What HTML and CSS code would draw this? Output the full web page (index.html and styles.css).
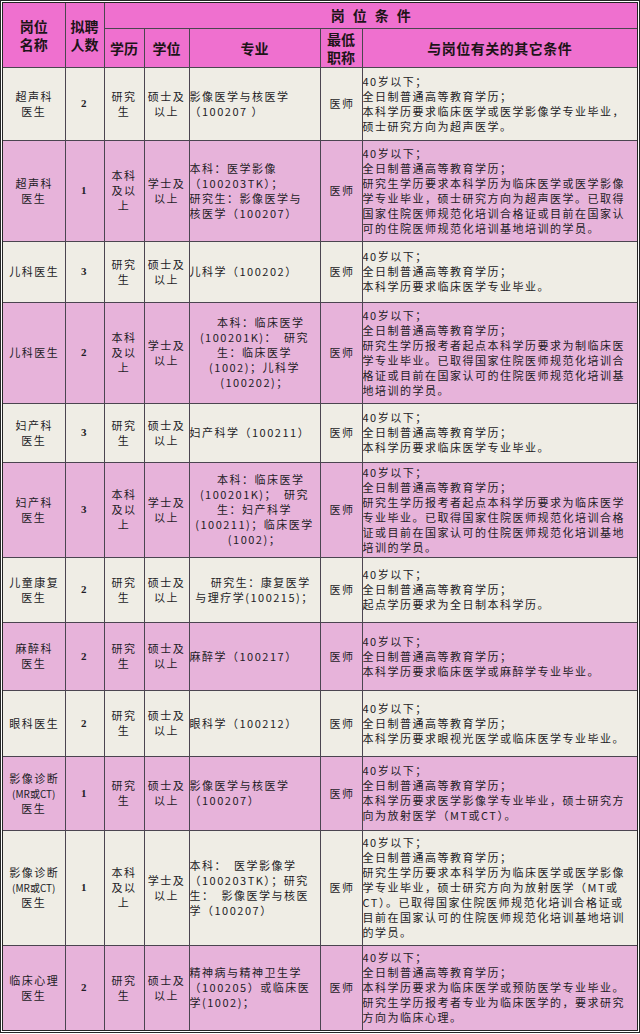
FILE: index.html
```html
<!DOCTYPE html>
<html lang="zh-CN">
<head>
<meta charset="utf-8">
<title>岗位条件</title>
<link rel="stylesheet" href="styles.css">
</head>
<body>
<div class="sheet">
<table class="jobs">
<colgroup>
<col class="c-name"><col class="c-num"><col class="c-edu"><col class="c-deg"><col class="c-major"><col class="c-title"><col class="c-other">
</colgroup>
<thead>
<tr class="hr1">
<th rowspan="2" class="hname">岗位<br>名称</th>
<th rowspan="2" class="hname">拟聘<br>人数</th>
<th colspan="5" class="hcond">岗位条件</th>
</tr>
<tr class="hr2">
<th>学历</th><th>学位</th><th>专业</th><th class="htitle">最低<br>职称</th><th class="hother">与岗位有关的其它条件</th>
</tr>
</thead>
<tbody>
<tr>
<td class="name">超声科<br>医生</td><td class="num">2</td><td class="edu">研究<br>生</td><td class="deg">硕士及<br>以上</td>
<td class="major">影像医学与核医学<br>（100207 ）</td><td class="title">医师</td>
<td class="other">40岁以下；<br>全日制普通高等教育学历；<br>本科学历要求临床医学或医学影像学专业毕业，<br>硕士研究方向为超声医学。</td>
</tr>
<tr>
<td class="name">超声科<br>医生</td><td class="num">1</td><td class="edu">本科<br>及以<br>上</td><td class="deg">学士及<br>以上</td>
<td class="major">本科：医学影像<br>（100203TK）；<br>研究生：影像医学与<br>核医学（100207）</td><td class="title">医师</td>
<td class="other">40岁以下；<br>全日制普通高等教育学历；<br>研究生学历要求本科学历为临床医学或医学影像<br>学专业毕业，硕士研究方向为超声医学。已取得<br>国家住院医师规范化培训合格证或目前在国家认<br>可的住院医师规范化培训基地培训的学员。</td>
</tr>
<tr>
<td class="name">儿科医生</td><td class="num">3</td><td class="edu">研究<br>生</td><td class="deg">硕士及<br>以上</td>
<td class="major">儿科学（100202）</td><td class="title">医师</td>
<td class="other">40岁以下；<br>全日制普通高等教育学历；<br>本科学历要求临床医学专业毕业。</td>
</tr>
<tr>
<td class="name">儿科医生</td><td class="num">2</td><td class="edu">本科<br>及以<br>上</td><td class="deg">学士及<br>以上</td>
<td class="major center">　本科：临床医学<br>(100201K)：　研究<br>生：临床医学<br>(1002)；儿科学<br>(100202)；</td><td class="title">医师</td>
<td class="other">40岁以下；<br>全日制普通高等教育学历；<br>研究生学历报考者起点本科学历要求为制临床医<br>学专业毕业。已取得国家住院医师规范化培训合<br>格证或目前在国家认可的住院医师规范化培训基<br>地培训的学员。</td>
</tr>
<tr>
<td class="name">妇产科<br>医生</td><td class="num">3</td><td class="edu">研究<br>生</td><td class="deg">硕士及<br>以上</td>
<td class="major">妇产科学（100211）</td><td class="title">医师</td>
<td class="other">40岁以下；<br>全日制普通高等教育学历；<br>本科学历要求临床医学专业毕业。</td>
</tr>
<tr>
<td class="name">妇产科<br>医生</td><td class="num">3</td><td class="edu">本科<br>及以<br>上</td><td class="deg">学士及<br>以上</td>
<td class="major center">　本科：临床医学<br>(100201K)；　研究<br>生：妇产科学<br>(100211)；临床医学<br>(1002)；</td><td class="title">医师</td>
<td class="other">40岁以下；<br>全日制普通高等教育学历；<br>研究生学历报考者起点本科学历要求为临床医学<br>专业毕业。已取得国家住院医师规范化培训合格<br>证或目前在国家认可的住院医师规范化培训基地<br>培训的学员。</td>
</tr>
<tr>
<td class="name">儿童康复<br>医生</td><td class="num">2</td><td class="edu">研究<br>生</td><td class="deg">硕士及<br>以上</td>
<td class="major center">　研究生：康复医学<br>与理疗学(100215)；</td><td class="title">医师</td>
<td class="other">40岁以下；<br>全日制普通高等教育学历；<br>起点学历要求为全日制本科学历。</td>
</tr>
<tr>
<td class="name">麻醉科<br>医生</td><td class="num">2</td><td class="edu">研究<br>生</td><td class="deg">硕士及<br>以上</td>
<td class="major">麻醉学（100217）</td><td class="title">医师</td>
<td class="other">40岁以下；<br>全日制普通高等教育学历；<br>本科学历要求临床医学或麻醉学专业毕业。</td>
</tr>
<tr>
<td class="name">眼科医生</td><td class="num">2</td><td class="edu">研究<br>生</td><td class="deg">硕士及<br>以上</td>
<td class="major">眼科学（100212）</td><td class="title">医师</td>
<td class="other">40岁以下；<br>全日制普通高等教育学历；<br>本科学历要求眼视光医学或临床医学专业毕业。</td>
</tr>
<tr>
<td class="name">影像诊断<br><span class="mr">(MR或CT)</span><br>医生</td><td class="num">1</td><td class="edu">研究<br>生</td><td class="deg">硕士及<br>以上</td>
<td class="major">影像医学与核医学<br>（100207）</td><td class="title">医师</td>
<td class="other">40岁以下；<br>全日制普通高等教育学历；<br>本科学历要求医学影像学专业毕业，硕士研究方<br>向为放射医学（MT或CT）。</td>
</tr>
<tr>
<td class="name">影像诊断<br><span class="mr">(MR或CT)</span><br>医生</td><td class="num">1</td><td class="edu">本科<br>及以<br>上</td><td class="deg">学士及<br>以上</td>
<td class="major">本科：　医学影像学<br>（100203TK）；研究<br>生：　影像医学与核医<br>学（100207）</td><td class="title">医师</td>
<td class="other">40岁以下；<br>全日制普通高等教育学历；<br>研究生学历要求本科学历为临床医学或医学影像<br>学专业毕业，硕士研究方向为放射医学（MT或<br>CT）。已取得国家住院医师规范化培训合格证或<br>目前在国家认可的住院医师规范化培训基地培训<br>的学员。</td>
</tr>
<tr>
<td class="name">临床心理<br>医生</td><td class="num">2</td><td class="edu">研究<br>生</td><td class="deg">硕士及<br>以上</td>
<td class="major">精神病与精神卫生学<br>（100205）或临床医<br>学(1002)；</td><td class="title">医师</td>
<td class="other">40岁以下；<br>全日制普通高等教育学历；<br>本科学历要求为临床医学或预防医学专业毕业。<br>研究生学历报考者专业为临床医学的，要求研究<br>方向为临床心理。</td>
</tr>
</tbody>
</table>
</div>
</body>
</html>
```
FILE: styles.css
```css
html, body {
  margin: 0;
  padding: 0;
  background: #ffffff;
}

body {
  font-family: "Noto Sans CJK SC", "Liberation Sans", sans-serif;
  color: #231c26;
}

.sheet {
  width: 640px;
  box-sizing: border-box;
  border: 3px double #262626;
}

.jobs {
  width: 100%;
  border-collapse: collapse;
  table-layout: fixed;
  border-style: hidden;
}

.c-name { width: 62px; }
.c-num { width: 39px; }
.c-edu { width: 40px; }
.c-deg { width: 45px; }
.c-major { width: 131px; }
.c-title { width: 42px; }
.c-other { width: 275px; }

.jobs th,
.jobs td {
  border: 1px solid #4b4550;
  padding: 0;
  vertical-align: middle;
  white-space: nowrap;
  overflow: hidden;
}

/* header */
.jobs th {
  background: #ef70cf;
  color: #1d1418;
  font-weight: 700;
  font-size: 14px;
  line-height: 18px;
  text-align: center;
}

.hr1 { height: 25px; }
.hr2 { height: 39px; }

.hname {
  line-height: 19px;
  padding-top: 2px;
}

.hcond {
  letter-spacing: 8px;
  text-indent: 8px;
}

.htitle {
  font-size: 13px;
  line-height: 17px;
}

.hother {
  letter-spacing: 0.5px;
}

/* body rows */
.jobs tbody tr:nth-child(odd) td { background: #efede5; }
.jobs tbody tr:nth-child(even) td { background: #e7b3da; }

.jobs tbody tr:nth-child(1) { height: 73px; }
.jobs tbody tr:nth-child(2) { height: 101px; }
.jobs tbody tr:nth-child(3) { height: 61px; }
.jobs tbody tr:nth-child(4) { height: 101px; }
.jobs tbody tr:nth-child(5) { height: 59px; }
.jobs tbody tr:nth-child(6) { height: 95px; }
.jobs tbody tr:nth-child(7) { height: 65px; }
.jobs tbody tr:nth-child(8) { height: 68px; }
.jobs tbody tr:nth-child(9) { height: 66px; }
.jobs tbody tr:nth-child(10) { height: 74px; }
.jobs tbody tr:nth-child(11) { height: 115px; }
.jobs tbody tr:nth-child(12) { height: 85px; }

.jobs td {
  font-size: 11px;
  line-height: 15px;
  letter-spacing: 1.5px;
}

.name {
  text-align: center;
  line-height: 16px;
  letter-spacing: 1.4px;
  text-indent: 1px;
}

.mr {
  letter-spacing: 0;
  font-size: 10px;
}

.num {
  text-align: center;
  font-family: "Liberation Serif", serif;
  font-weight: 700;
  font-size: 15px;
  letter-spacing: 0;
}

.edu,
.deg {
  text-align: center;
  font-size: 11.5px;
  line-height: 16px;
  letter-spacing: 0.8px;
}

.major {
  text-align: left;
  padding-left: 3px;
  letter-spacing: 1.3px;
}

.major.center {
  text-align: center;
  padding-left: 0;
}

.title {
  text-align: center;
  font-size: 12px;
  letter-spacing: 2px;
  text-indent: 2px;
}

.other {
  text-align: left;
  padding-left: 3px;
}
```
